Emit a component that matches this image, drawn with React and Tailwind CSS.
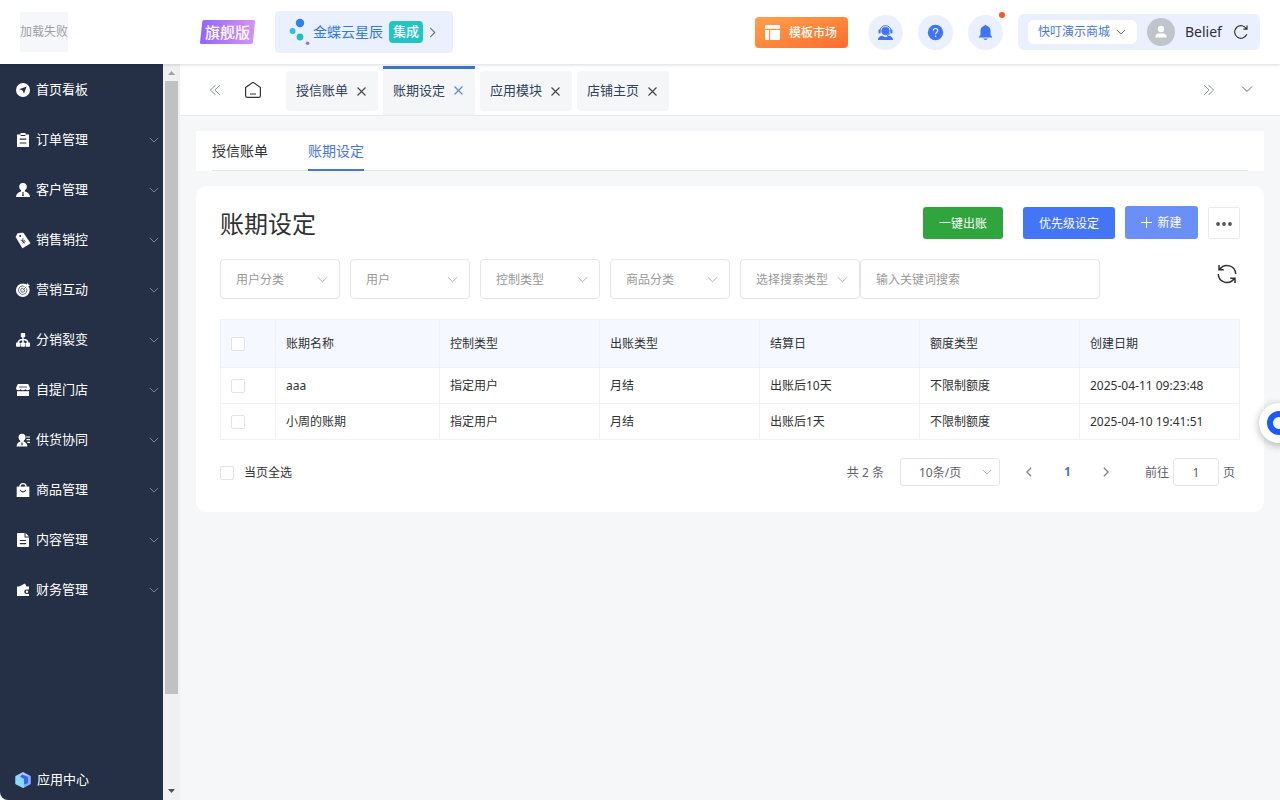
import React from "react";

function Chevron({ className = "", dir = "down", size = 12, width = 1 }) {
  const paths = {
    down: "M1 3.5 6 8.5 11 3.5",
    right: "M3.5 1 8.5 6 3.5 11",
    left: "M8.5 1 3.5 6 8.5 11",
  };
  return (
    <svg viewBox="0 0 12 12" width={size} height={size} fill="none" stroke="currentColor" strokeWidth={width} className={"shrink-0 " + className} aria-hidden="true">
      <path d={paths[dir]} />
    </svg>
  );
}

function DoubleChevron({ flip }) {
  return (
    <svg viewBox="0 0 12 12" width="12" height="12" fill="none" stroke="currentColor" strokeWidth="1" aria-hidden="true">
      {flip ? <path d="M1 1 6 6 1 11M5.5 1l5 5-5 5" /> : <path d="M6.5 1l-5 5 5 5M11 1 6 6l5 5" />}
    </svg>
  );
}

const DARK = "#252f46";

const menuIcons = {
  home: (
    <>
      <circle cx="7" cy="7" r="7" />
      <path d="M10.6 3.4 8 10.8 6.6 7.5 3.2 6.2Z" fill={DARK} />
    </>
  ),
  order: (
    <>
      <path d="M1 1.500h3.500V0h5v1.500H13V14H1Z" />
      <path d="M4.600 2.500h4.800M3.700 6.200h6.600M3.700 10h6.600" stroke={DARK} strokeWidth="1.200" />
    </>
  ),
  customer: (
    <>
      <circle cx="7" cy="3.800" r="3.800" />
      <path d="M5 7h4v1.500c3 .8 4.800 2.600 5 5.500H0c.2-2.900 2-4.700 5-5.500Z" />
      <path d="M6.300 9h1.400l-.3 1 .5 2.500-.9 1-.9-1 .5-2.500Z" fill={DARK} />
    </>
  ),
  tag: (
    <>
      <path d="M1.600.6 7.300 0 14.200 10.200 6.500 15 0 4.100Z" stroke="#fff" strokeWidth=".6" strokeLinejoin="round" />
      <circle cx="4.100" cy="3.100" r="1" fill={DARK} />
      <path d="m4.700 7.200 2 .4.300-2.400M6.700 7.600l1.700 2.800M5.800 9.100l3.200-2M6.500 10.300l3.200-2" stroke={DARK} strokeWidth=".8" fill="none" />
    </>
  ),
  target: (
    <>
      <circle cx="6.800" cy="7.200" r="6.800" />
      <path d="M10.500 5.400A4.200 4.200 0 1 1 8.500 3.400M8.600 6.500A2 2 0 1 1 7.400 5.300M6.800 7.200 11 3" stroke={DARK} strokeWidth=".7" fill="none" />
      <path d="m10 3.800.3-2.300L12 0l.3 1.700L14 2l-1.500 1.600Z" />
    </>
  ),
  tree: (
    <>
      <rect x="4.800" y="0" width="4.400" height="4.200" rx=".8" />
      <rect x="0" y="9.500" width="4.400" height="4.200" rx=".8" />
      <rect x="4.800" y="9.500" width="4.400" height="4.200" rx=".8" />
      <rect x="9.600" y="9.500" width="4.400" height="4.200" rx=".8" />
      <path d="M7 4v6M2.200 10C2.200 7.400 4 6.500 7 6.500s4.800.9 4.800 3.500" stroke="#fff" strokeWidth="1.500" fill="none" />
    </>
  ),
  store: (
    <>
      <path d="M1.800 1h10.400L14 5.300c0 1.300-1 2-2.300 2-.9 0-1.700-.4-2.300-1-.6.6-1.500 1-2.400 1s-1.800-.4-2.400-1c-.6.600-1.400 1-2.300 1C1 7.300 0 6.600 0 5.300Z" />
      <path d="M1 8.200h12V13H1Z" />
      <path d="M3 4h8" stroke={DARK} strokeWidth=".8" />
    </>
  ),
  supply: (
    <>
      <circle cx="6" cy="4.200" r="3.500" />
      <path d="M4.300 6.500h3.400v2c2.300.8 3.500 2.300 3.700 5H.6c.2-2.700 1.400-4.200 3.700-5Z" />
      <path d="m6 8.800.8 2.300L6 13l-.8-1.900Z" fill={DARK} />
      <path d="M10 4h4M10.500 6.700H14M11.400 9.400H14" stroke="#fff" strokeWidth="1.200" />
    </>
  ),
  bag: (
    <>
      <path d="M.7 3.600h12.600V14H.7Z" />
      <path d="M4 5V3.600a3 3 0 0 1 6 0V5" fill="none" stroke="#fff" strokeWidth="1.300" />
      <path d="M4.300 6.800a2.800 2.800 0 0 0 5.400 0" fill="none" stroke={DARK} strokeWidth="1.100" />
    </>
  ),
  doc: (
    <>
      <path d="M2 0h6.500v4.500H13V13a1 1 0 0 1-1 1H2a1 1 0 0 1-1-1V1a1 1 0 0 1 1-1Z" />
      <path d="M9.500 0 13 3.600H9.500Z" />
      <path d="M3.800 7.500h6.400M3.800 10.700h6.400" stroke={DARK} strokeWidth="1.200" />
    </>
  ),
  wallet: (
    <>
      <path d="M1 3.500h2L9 .5l1.500 3H13v3h-2.500a2 2 0 0 0 0 4.500H13v2H1Z" />
      <circle cx="11" cy="8.700" r="1.200" />
    </>
  ),
};

const menu = [
  ["home", "首页看板"],
  ["order", "订单管理"],
  ["customer", "客户管理"],
  ["tag", "销售销控"],
  ["target", "营销互动"],
  ["tree", "分销裂变"],
  ["store", "自提门店"],
  ["supply", "供货协同"],
  ["bag", "商品管理"],
  ["doc", "内容管理"],
  ["wallet", "财务管理"],
];

function Header() {
  return (
    <header className="relative z-10 flex h-16 shrink-0 items-center bg-white pr-5 pl-5 shadow-[0_1px_3px_rgba(0,0,0,0.15)]">
      <div className="flex w-[180px] shrink-0">
        <div className="flex h-10 w-12 items-center justify-center bg-[#f5f7fa] text-xs whitespace-nowrap text-[#a0a0a0]">加载失败</div>
      </div>
      <div className="grid h-6 w-[55px] shrink-0 place-items-center">
        <svg viewBox="0 0 55 24" className="h-6 w-[55px] [grid-area:1/1]" aria-hidden="true">
          <defs>
            <linearGradient id="plan" x1="0" x2="1">
              <stop offset="0" stopColor="#9463fb" />
              <stop offset="1" stopColor="#d793f4" />
            </linearGradient>
          </defs>
          <path d="M4 0h49.500a1.500 1.500 0 0 1 1.500 1.700L53 22.500a1.700 1.700 0 0 1-1.600 1.500H1.500A1.500 1.500 0 0 1 0 22.400L2.300 1.500A1.700 1.700 0 0 1 4 0Z" fill="url(#plan)" />
        </svg>
        <span className="text-[15px] leading-6 font-medium text-white [grid-area:1/1]">旗舰版</span>
      </div>
      <a href="#kingdee" className="ml-5 flex h-[42px] w-[178px] shrink-0 items-center rounded bg-[#eaf0fe] pl-3 text-[#2f7bdc]">
        <svg viewBox="0 0 26 32" width="26" height="32" className="shrink-0" aria-hidden="true">
          <circle cx="13" cy="7" r="4.200" fill="#2a82ea" />
          <circle cx="5.600" cy="15" r="2.900" fill="#2bbdf0" />
          <circle cx="13" cy="21" r="3.400" fill="#20bfc4" />
          <circle cx="20.600" cy="27.300" r="1.800" fill="#9d6fe0" />
        </svg>
        <span className="text-sm whitespace-nowrap">金蝶云星辰</span>
        <span className="ml-[6px] flex h-[22px] w-[34px] shrink-0 items-center justify-center rounded bg-[#22c4c6] text-[13px] font-medium text-white">集成</span>
        <Chevron dir="right" size={11} className="ml-1 text-[#6b7280]" width={1.2} />
      </a>

      <div className="ml-auto flex shrink-0 items-center">
        <button className="flex h-[31px] w-[93px] items-center gap-2 rounded bg-linear-to-br from-[#ffa04a] to-[#ff6c2e] pl-[10px] text-xs font-medium text-white">
          <svg viewBox="0 0 15 15" width="15" height="15" fill="currentColor" className="mr-px" aria-hidden="true">
            <path d="M1 0h13a1 1 0 0 1 1 1v2.700H0V1a1 1 0 0 1 1-1ZM0 5h4v10H1a1 1 0 0 1-1-1ZM5.200 5H15v9a1 1 0 0 1-1 1H5.200Z" />
          </svg>
          <span className="pt-px">模板市场</span>
        </button>
        <div className="ml-5 flex gap-[15px] text-[#3f74f6]">
          <button aria-label="客服" className="grid h-[35px] w-[35px] place-items-center rounded-full bg-[#eaf0fe]">
            <svg viewBox="-0.500 -0.500 17 17" width="17" height="17" fill="currentColor" aria-hidden="true">
              <circle cx="8" cy="6.600" r="4.100" />
              <path d="M2.300 6.800a5.700 5.700 0 0 1 11.400 0M12.300 8.700c-.5 1.300-1.500 2.200-2.800 2.600" fill="none" stroke="currentColor" strokeWidth="1" />
              <rect x="1" y="5" width="2.200" height="4" rx="1" />
              <rect x="12.800" y="5" width="2.200" height="4" rx="1" />
              <path d="M.5 15.500c0-2.500 1.800-4.200 4.500-4.300 1 .9 2 1.200 3 1.200s2-.3 3-1.200c2.700.1 4.500 1.800 4.500 4.300Z" />
            </svg>
          </button>
          <button aria-label="帮助" className="grid h-[35px] w-[35px] place-items-center rounded-full bg-[#eaf0fe]">
            <svg viewBox="-0.500 -0.500 17 17" width="17" height="17" aria-hidden="true">
              <circle cx="8" cy="8" r="7.700" fill="currentColor" />
              <path d="M5.700 6.300C5.700 4.800 6.700 4 8 4s2.300.9 2.300 2.100c0 1.600-2.200 1.800-2.200 3.700" fill="none" stroke="#fff" strokeWidth="1.100" />
              <circle cx="8.100" cy="11.700" r=".8" fill="#fff" />
            </svg>
          </button>
          <button aria-label="通知" className="relative grid h-[35px] w-[35px] place-items-center rounded-full bg-[#eaf0fe]">
            <svg viewBox="-0.500 -0.500 17 17" width="17" height="17" fill="currentColor" aria-hidden="true">
              <path d="M7 1.300a1 1 0 0 1 2 0C11.700 1.800 13 3.900 13 6.300v4.200l1.600 2v.6H1.400v-.6l1.600-2V6.300c0-2.400 1.300-4.500 4-5ZM5.800 14h4.400c-.3.900-1.100 1.400-2.200 1.400S6.100 14.900 5.800 14Z" />
            </svg>
            <span className="absolute -top-[3px] -right-[2px] h-[6px] w-[6px] rounded-full bg-[#f9572b]" />
          </button>
        </div>
        <div className="ml-[15px] flex h-9 w-[242px] items-center rounded-md bg-[#eaf0fe] pl-[10px]">
          <button className="flex h-6 w-[109px] items-center gap-[6px] rounded-md bg-white pl-[10px] text-xs whitespace-nowrap text-[#4a74dd]">
            快叮演示商城
            <Chevron size={10} width={1.2} className="text-[#666]" />
          </button>
          <svg viewBox="0 0 28 28" width="28" height="28" className="ml-[10px] shrink-0" aria-hidden="true">
            <circle cx="14" cy="14" r="14" fill="#c0c4cc" />
            <circle cx="14" cy="11" r="3.200" fill="#fff" />
            <path d="M8.300 19.600c0-2.600 1.500-4 3.700-4h4c2.200 0 3.700 1.400 3.700 4Z" fill="#fff" />
          </svg>
          <span className="ml-[10px] text-sm text-[#303133]">Belief</span>
          <button aria-label="刷新" className="ml-[11px] text-[#303133]">
            <svg viewBox="0 0 16 16" width="16" height="16" fill="none" stroke="currentColor" strokeWidth="1.200" aria-hidden="true">
              <path d="M13.800 10.300a6.300 6.300 0 1 1-.3-5.300M14 1.500V5.200h-3.700" />
            </svg>
          </button>
        </div>
      </div>
    </header>
  );
}

function Sidebar() {
  return (
    <>
      <aside className="flex w-[163px] shrink-0 flex-col justify-between rounded-bl-lg bg-[#252f46] text-[13px] text-white">
        <nav className="pt-px">
          {menu.map(([icon, label], i) => (
            <a key={icon} href={"#" + icon} className="flex h-[50px] items-center pr-1 pl-4">
              <svg viewBox="0 0 14 14" width="14" height="14" fill="#fff" className="shrink-0 overflow-visible" aria-hidden="true">
                {menuIcons[icon]}
              </svg>
              <span className="ml-[6px]">{label}</span>
              {i > 0 && <Chevron size={10} width={1.2} className="ml-auto text-[#7d8494]" />}
            </a>
          ))}
        </nav>
        <a href="#apps" className="flex h-10 items-center gap-[6px] pl-[15px]">
          <svg viewBox="0 0 16 16" width="16" height="16" aria-hidden="true">
            <path d="M8 0 15.500 4v8L8 16 .5 12V4Z" fill="#a9c8ff" />
            <path d="M8 3 15.500 4v8L8 16Z" fill="#86aafa" />
            <path d="M7 2.500 13 5v6l-3 1.500L4 6Z" fill="#3467e8" />
            <path d="M.5 4.500 4 4l5 3v9L.5 12Z" fill="#86dcfc" />
          </svg>
          应用中心
        </a>
      </aside>
      <div className="flex w-[17px] shrink-0 flex-col items-center bg-[#f0f0f0]" aria-hidden="true">
        <svg viewBox="0 0 17 17" width="17" height="17" className="shrink-0"><path d="M5 11h7L8.500 7Z" fill="#a3a3a3" /></svg>
        <div className="flex min-h-0 w-full flex-1 flex-col px-[2px]">
          <div className="flex-[613] bg-[#c1c1c1]" />
          <div className="flex-[89]" />
        </div>
        <svg viewBox="0 0 17 17" width="17" height="17" className="shrink-0"><path d="M5 6h7l-3.500 4Z" fill="#505050" /></svg>
      </div>
    </>
  );
}

function TabBar() {
  const tabs = ["授信账单", "账期设定", "应用模块", "店铺主页"];
  return (
    <div className="flex h-[52px] shrink-0 items-end border-b border-[#e8eaec] bg-white pr-[27px] pl-[29px]">
      <button aria-label="向左" className="flex h-[49px] items-center pb-[2px] text-[#8a8f99]"><DoubleChevron /></button>
      <button aria-label="主页" className="ml-6 flex h-[49px] items-center pb-px text-[#333]">
        <svg viewBox="0 0 16 16" width="16" height="16" fill="none" stroke="currentColor" strokeWidth="1.200" aria-hidden="true">
          <path d="M.6 5.500 6.900.9a1.800 1.800 0 0 1 2.200 0l6.300 4.600v8.300a1.600 1.600 0 0 1-1.600 1.600H2.200a1.600 1.600 0 0 1-1.600-1.600ZM5 12h6" />
        </svg>
      </button>
      <div className="ml-[25px] flex items-end gap-[5px]">
        {tabs.map((t) => {
          const on = t === "账期设定";
          return (
            <div key={t} className={"flex w-[92px] items-center bg-[#f4f6f8] pl-[10px] text-[13px] text-[#303f5c] " + (on ? "h-[49px] border-t-3 border-[#3b74cf] pb-[3px]" : "mb-1 h-10 rounded")}>
              <a href="#tab" className="whitespace-nowrap">{t}</a>
              <button aria-label={"关闭" + t} className="ml-[9px]">
                <svg viewBox="0 0 9 9" width="9" height="9" fill="none" stroke={on ? "#5c86e8" : "#444"} strokeWidth="1.100" aria-hidden="true"><path d="m.5.5 8 8M8.500.5l-8 8" /></svg>
              </button>
            </div>
          );
        })}
      </div>
      <button aria-label="向右" className="ml-auto flex h-[49px] items-center pb-[2px] text-[#8a8f99]"><DoubleChevron flip /></button>
      <button aria-label="更多标签" className="ml-[26px] flex h-[49px] items-center pb-[3px] text-[#666]"><Chevron size={12} /></button>
    </div>
  );
}

function Filter({ label }) {
  return (
    <div className="grid w-[120px] items-center">
      <select aria-label={label} className="h-10 w-full appearance-none rounded border border-[#e4e5e7] bg-white pt-[2px] pr-6 pl-[15px] text-xs text-[#999] outline-none [grid-area:1/1]">
        <option>{label}</option>
      </select>
      <Chevron size={11} className="pointer-events-none mr-3 justify-self-end text-[#aaa] [grid-area:1/1]" />
    </div>
  );
}

function Box({ id, label }) {
  return <input id={id} type="checkbox" aria-label={label} className="block h-[14px] w-[14px] shrink-0 appearance-none rounded-xs border border-[#e2e3e6] bg-white checked:bg-[#4475f6]" />;
}

const heads = ["账期名称", "控制类型", "出账类型", "结算日", "额度类型", "创建日期"];
const rows = [
  ["aaa", "指定用户", "月结", "出账后10天", "不限制额度", "2025-04-11 09:23:48"],
  ["小周的账期", "指定用户", "月结", "出账后1天", "不限制额度", "2025-04-10 19:41:51"],
];

function Panel() {
  return (
    <section className="mt-[15px] rounded-[10px] bg-white px-6 pt-5 pb-[26px]">
      <div className="flex items-end">
        <h1 className="text-2xl leading-[30px] text-[#303133]">账期设定</h1>
        <div className="ml-auto flex items-end text-xs text-white">
          <button className="h-8 w-20 rounded-[3px] bg-[#31a53d] pt-px">一键出账</button>
          <button className="ml-5 h-8 w-[92px] rounded-[3px] bg-[#4475f6] pt-px">优先级设定</button>
          <button className="ml-[10px] flex h-[33px] w-[73px] items-center justify-center gap-[5px] rounded-[3px] bg-[#6a90f8]">
            <svg viewBox="0 0 11 11" width="11" height="11" stroke="currentColor" aria-hidden="true"><path d="M5.500 0v11M0 5.500h11" /></svg>
            新建
          </button>
          <button aria-label="更多" className="ml-[10px] grid h-8 w-8 place-items-center rounded-xs border border-[#e8eaec] bg-white pt-px text-[#555]">
            <svg viewBox="0 0 16 4" width="16" height="4" fill="currentColor" aria-hidden="true"><circle cx="2" cy="2" r="1.900" /><circle cx="8" cy="2" r="1.900" /><circle cx="14" cy="2" r="1.900" /></svg>
          </button>
        </div>
      </div>

      <div className="mt-5 flex">
        <div className="flex gap-[10px]">
          {["用户分类", "用户", "控制类型", "商品分类", "选择搜索类型"].map((f) => <Filter key={f} label={f} />)}
        </div>
        <input type="text" aria-label="关键词" placeholder="输入关键词搜索" className="h-10 w-60 rounded border border-[#e4e5e7] px-[15px] text-xs outline-none placeholder:text-[#999]" />
        <button aria-label="刷新列表" className="mt-[5px] mr-[2px] ml-auto h-5 w-[22px] text-[#303133]">
          <svg viewBox="0 0 22 20" width="22" height="20" fill="none" stroke="currentColor" strokeWidth="1.500" aria-hidden="true">
            <path d="M3.900 5.200A8.700 8.700 0 0 1 19.700 10M18.100 14.800A8.700 8.700 0 0 1 2.300 10M3 1v4.800h4.800M19 19v-4.800h-4.800" />
          </svg>
        </button>
      </div>

      <table className="mt-5 w-full table-fixed border-collapse text-left text-xs text-[#303133]">
        <colgroup>
          <col className="w-[55px]" />
          <col className="w-[164px]" />
          <col /><col /><col /><col /><col />
        </colgroup>
        <thead>
          <tr className="h-12 bg-[#f5f8ff]">
            <th className="border border-[#f0f1f4] px-[10px]"><Box label="全选" /></th>
            {heads.map((h) => <th key={h} className="border border-[#f0f1f4] px-[10px] font-normal">{h}</th>)}
          </tr>
        </thead>
        <tbody>
          {rows.map((r) => (
            <tr key={r[0]} className="h-9">
              <td className="border border-[#f0f1f4] px-[10px]"><Box label={"选择" + r[0]} /></td>
              {r.map((c, i) => <td key={i} className="border border-[#f0f1f4] px-[10px] whitespace-nowrap">{c}</td>)}
            </tr>
          ))}
        </tbody>
      </table>

      <div className="mt-[18px] flex h-7 items-center pr-[5px] text-xs text-[#606266]">
        <div className="flex items-center gap-[10px] pt-[2px] text-[#303133]">
          <Box id="page-all" />
          <label htmlFor="page-all">当页全选</label>
        </div>
        <span className="ml-auto pt-px">共 2 条</span>
        <div className="ml-4 grid w-[100px] items-center">
          <select aria-label="每页条数" className="h-7 w-full appearance-none rounded-[3px] border border-[#e4e5e7] bg-white pt-px pr-6 pl-[18px] text-xs outline-none [grid-area:1/1]">
            <option>10条/页</option>
          </select>
          <Chevron size={10} className="pointer-events-none mr-2 justify-self-end text-[#aaa] [grid-area:1/1]" />
        </div>
        <nav className="ml-[10px] flex text-[#888]" aria-label="分页">
          <button aria-label="上一页" className="grid h-7 w-[38px] place-items-center"><Chevron dir="left" size={10} width={1.6} /></button>
          <button className="h-7 w-[39px] font-bold text-[#4475e0]">1</button>
          <button aria-label="下一页" className="grid h-7 w-[38px] place-items-center"><Chevron dir="right" size={10} width={1.6} /></button>
        </nav>
        <label htmlFor="goto" className="ml-5 pt-px">前往</label>
        <input id="goto" type="text" defaultValue="1" className="mx-1 h-7 w-[46px] rounded border border-[#e4e5e7] text-center outline-none" />
        <span className="pt-px">页</span>
      </div>
    </section>
  );
}

export default function App() {
  return (
    <div className="flex min-h-screen flex-col bg-[#f6f7f9] font-['Noto_Sans','Noto_Sans_CJK_SC',sans-serif]">
      <Header />
      <div className="flex flex-1">
        <Sidebar />
        <main className="min-w-0 flex-1">
          <TabBar />
          <div className="px-4 pt-[15px]">
            <div className="h-10 bg-white px-4">
              <div className="flex h-10 gap-10 border-b border-[#e4e7ed] text-sm">
                <a href="#bill" className="h-10 leading-10 text-[#303133]">授信账单</a>
                <a href="#period" className="h-10 border-b-2 border-[#4a76cf] leading-10 text-[#4a76dc]">账期设定</a>
              </div>
            </div>
            <Panel />
          </div>
        </main>
      </div>
      <button aria-label="在线客服" className="fixed top-[403px] -right-[19px] grid h-10 w-10 place-items-center rounded-full bg-white shadow-[0_2px_8px_rgba(0,0,0,0.3)]">
        <span className="h-6 w-6 rounded-full border-6 border-[#1b5cff] bg-white" />
      </button>
    </div>
  );
}
